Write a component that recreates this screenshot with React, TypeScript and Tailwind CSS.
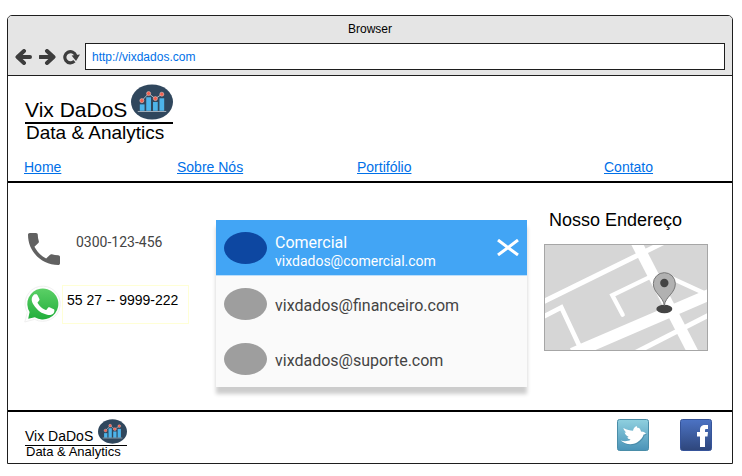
const sans = "font-['Liberation_Sans',Arial,sans-serif]";
const roboto = "font-[Roboto,sans-serif]";
const linkColor = 'text-[#0070e8]';

function ArrowIcon({ flip = false }: { flip?: boolean }) {
  return (
    <svg viewBox="0 0 17 16" className="h-4 w-[17px]" fill="none" stroke="#3d3d3d" strokeWidth="4" aria-hidden="true">
      {flip ? <path d="M1 8H14M8 2l6.500 6L8 14" strokeLinejoin="round" strokeLinecap="round" /> : <path d="M15 8H3M9 2L2.500 8 9 14" strokeLinejoin="round" strokeLinecap="round" />}
    </svg>
  );
}

function ReloadIcon() {
  return (
    <svg viewBox="0 0 17 16" className="h-4 w-[17px]" aria-hidden="true">
      <path d="M11.400 12.200A5.600 5.600 0 1 1 12.800 6.600" fill="none" stroke="#3d3d3d" strokeWidth="3.200" />
      <path d="M8.600 6.600L17 5.600 13 12z" fill="#3d3d3d" />
    </svg>
  );
}

function ChartBadge({ className }: { className: string }) {
  return (
    <svg viewBox="0 0 124 106" className={className} aria-hidden="true">
      <ellipse cx="62" cy="53" rx="62" ry="52" fill="#30475d" />
      <g fill="#4db4ea">
        <rect x="26" y="60" width="14" height="19" />
        <rect x="45" y="39" width="14" height="40" />
        <rect x="65" y="53" width="14" height="26" />
        <rect x="84" y="42" width="14" height="37" />
      </g>
      <path d="M20 81H104" stroke="#dfe6ea" strokeWidth="2" />
      <path d="M32 49L52 28 72 43 91 30" fill="none" stroke="#e8ecef" strokeWidth="2" />
      <g fill="#f0604f" stroke="#f6d3ce" strokeWidth="1.500">
        <circle cx="32" cy="49" r="6" />
        <circle cx="52" cy="28" r="6" />
        <circle cx="72" cy="43" r="6" />
        <circle cx="91" cy="30" r="6" />
      </g>
    </svg>
  );
}

const handset =
  'M6.62 10.79c1.44 2.83 3.76 5.14 6.59 6.59l2.2-2.2c.27-.27.67-.36 1.02-.24 1.12.37 2.33.57 3.57.57.55 0 1 .45 1 1V20c0 .55-.45 1-1 1-9.39 0-17-7.61-17-17 0-.55.45-1 1-1h3.5c.55 0 1 .45 1 1 0 1.25.2 2.45.57 3.57.11.35.03.74-.25 1.02l-2.2 2.2z';

function WhatsAppIcon() {
  return (
    <svg viewBox="0 0 38 38" className="h-[38px] w-[38px] shrink-0" aria-hidden="true">
      <defs>
        <linearGradient id="wa" x1="0" y1="0" x2="0" y2="1">
          <stop offset="0" stopColor="#5bd066" />
          <stop offset="1" stopColor="#22ae3c" />
        </linearGradient>
      </defs>
      <path d="M.8 37L3.300 27.400A17.600 17.600 0 1 1 10.600 34.400z" fill="#fdfdfd" stroke="#ececec" strokeWidth=".8" />
      <path d="M4.200 33.700L5.600 27A15.500 15.500 0 1 1 10.800 32.200z" fill="url(#wa)" />
      <path
        d="M13.400 10.100c-.4-.9-.8-.9-1.200-.9h-1c-.4 0-1 .1-1.500.7-.5.6-2 1.900-2 4.600s2 5.400 2.300 5.700c.3.4 3.900 6.200 9.600 8.400 4.700 1.900 5.700 1.500 6.700 1.400 1-.1 3.300-1.300 3.700-2.600.5-1.300.5-2.400.3-2.600-.1-.3-.5-.4-1.100-.7l-3.700-1.800c-.5-.2-.9-.3-1.300.3l-1.700 2.100c-.3.4-.7.4-1.200.1-.6-.3-2.400-.9-4.500-2.800-1.700-1.500-2.800-3.300-3.100-3.900-.3-.6 0-.9.2-1.100l.9-1c.3-.3.4-.6.6-.9.2-.4.1-.7 0-1z"
        fill="#fff"
      />
    </svg>
  );
}

function StreetMap() {
  return (
    <svg viewBox="0 0 492 321" className="block w-full" role="img" aria-label="Mapa">
      <rect width="492" height="321" fill="#d6d6d6" />
      <g fill="none" stroke="#fff">
        <path d="M-8 176L360 -5" strokeWidth="15" />
        <path d="M272 -14L452 335" strokeWidth="33" />
        <path d="M85 329L510 146" strokeWidth="35" />
        <path d="M-8 221L52 190 108 310" strokeWidth="14" />
        <path d="M320 98L205 154 236 212" strokeWidth="13" strokeLinecap="round" />
        <path d="M380 101L480 147" strokeWidth="13" />
        <path d="M270 328L505 208" strokeWidth="15" />
      </g>
      <ellipse cx="361" cy="195" rx="24" ry="12.500" fill="#444" />
      <path d="M361 184C358 158 328 148 328 119A33 33 0 0 1 394 119C394 148 364 158 361 184z" fill="#b1b1b1" stroke="#777" strokeWidth="3" />
      <circle cx="361" cy="117" r="12.500" fill="#444" />
      <rect x="1.500" y="1.500" width="489" height="318" fill="none" stroke="#a6a6a6" strokeWidth="3" />
    </svg>
  );
}

const bird =
  'M29 14.500C27.500 13 26 12.300 24 12.500 24 10.500 22.500 8.500 20.500 8.700L19.500 7C17.800 7.800 16.500 9.300 16 11.800 13 11.800 10 10.800 6.300 9 7 11 8 12.500 9.300 13.500L7.600 13.500C8.200 15.500 9.800 17.200 11.800 17.900L10.200 18.500C11 19.700 12 20.300 13.500 20.700 11 22.300 7.500 22.600 3.700 21.500 8 25.500 15 26.300 20 23.500 24 21.200 26 18 26.600 15.600 27.600 15.600 28.400 15.200 29 14.500z';

function TwitterIcon() {
  return (
    <svg viewBox="0 0 32 32" className="h-8 w-8" aria-hidden="true">
      <defs>
        <linearGradient id="tw" x1="0" y1="0" x2="0" y2="1">
          <stop offset="0" stopColor="#8fd0df" />
          <stop offset="1" stopColor="#4a93b8" />
        </linearGradient>
      </defs>
      <rect x=".5" y=".5" width="31" height="31" rx="2" fill="url(#tw)" stroke="#4a8da8" />
      <path d={bird} transform="translate(.8 1)" fill="#3d7f9d" opacity=".6" />
      <path d={bird} fill="#fff" />
    </svg>
  );
}

function FacebookIcon() {
  return (
    <svg viewBox="0 0 32 32" className="h-8 w-8" aria-hidden="true">
      <defs>
        <linearGradient id="fb" x1="0" y1="0" x2="0" y2="1">
          <stop offset="0" stopColor="#4c73c4" />
          <stop offset="1" stopColor="#2e467b" />
        </linearGradient>
      </defs>
      <rect x=".5" y=".5" width="31" height="31" rx="2" fill="url(#fb)" stroke="#36549a" />
      <path d="M20 28V17.500H17V13H20V11C20 7.500 21.800 6 25 6H28V10H26.200C25.200 10 25 10.500 25 11.500V13H28L27.500 17.500H25V28z" fill="#fff" />
    </svg>
  );
}

const navItems = ['Home', 'Sobre Nós', 'Portifólio', 'Contato'];
const contacts = ['vixdados@financeiro.com', 'vixdados@suporte.com'];

export default function App() {
  return (
    <div className={`${sans} bg-white pt-[15px] pr-[9px] pb-3 pl-[7px] text-black`}>
      <div className="overflow-hidden rounded-t-[5px] border border-[#1e1e1e]">
        <div className="border-b border-[#1e1e1e] bg-[#e5e5e5] px-[7px] pb-[5px]">
          <div className="pt-px pb-[2px] text-center text-xs leading-6">Browser</div>
          <div className="flex items-center">
            <div className="flex gap-[7px] pr-[5px]">
              <button type="button" aria-label="Voltar"><ArrowIcon /></button>
              <button type="button" aria-label="Avançar"><ArrowIcon flip /></button>
              <button type="button" aria-label="Recarregar"><ReloadIcon /></button>
            </div>
            <input
              aria-label="Endereço"
              defaultValue="http://vixdados.com"
              className={`h-[27px] min-w-0 flex-1 border border-[#1e1e1e] bg-white px-[6px] text-xs outline-none ${linkColor}`}
            />
          </div>
        </div>

        <header className="border-b-2 border-black pt-2 pb-1 pl-4">
          <div className="ml-px w-[148px]">
            <div className="flex items-end justify-between border-b-2 border-black pb-[2px]">
              <span className="text-[21px] leading-5 whitespace-nowrap">Vix DaDoS</span>
              <ChartBadge className="h-9 w-[42px] shrink-0" />
            </div>
            <div className="pl-px text-[19px] leading-[18px] whitespace-nowrap">Data &amp; Analytics</div>
          </div>
          <nav className="mt-[15px] grid grid-cols-[153fr_180fr_247fr_128fr] text-sm leading-5">
            {navItems.map((item) => (
              <a key={item} href="#" className={`justify-self-start underline ${linkColor}`}>{item}</a>
            ))}
          </nav>
        </header>

        <main className="grid grid-cols-[175fr_311fr_164fr] items-start gap-[17px] pr-6 pb-[23px] pl-4">
          <section className="pt-[50px]">
            <div className="flex items-start gap-4 pl-1">
              <svg viewBox="3 3 18 18" preserveAspectRatio="none" className="h-8 w-8 shrink-0" aria-hidden="true">
                <path d={handset} fill="#616161" />
              </svg>
              <span className={`${roboto} text-sm leading-[18px] text-[#444]`}>0300-123-456</span>
            </div>
            <div className="mt-5 flex items-start">
              <WhatsAppIcon />
              <div className="h-[39px] w-[127px] border border-[#ffffd6] px-1 py-1 text-sm leading-5 whitespace-nowrap">55 27 -- 9999-222</div>
            </div>
          </section>

          <section className={`${roboto} mt-[37px] bg-[#fafafa] shadow-[0_7px_4px_rgba(0,0,0,0.2)]`}>
            <div className="flex h-14 items-center border-b border-[#bbdefb] bg-[#42a5f5] px-2 text-white">
              <span className="h-8 w-[43px] shrink-0 rounded-[50%] bg-[#0d47a1]" />
              <div className="ml-2 flex-1 pt-2">
                <div className="text-base leading-[18px]">Comercial</div>
                <div className="text-sm leading-[18px]">vixdados@comercial.com</div>
              </div>
              <button type="button" aria-label="Fechar">
                <svg viewBox="0 0 22 17" className="h-[17px] w-[22px]" fill="none" stroke="#fff" strokeWidth="3" aria-hidden="true">
                  <path d="M1 1L21 16M21 1L1 16" />
                </svg>
              </button>
            </div>
            <ul className="pb-px">
              {contacts.map((mail) => (
                <li key={mail} className="flex h-[55px] items-center px-2">
                  <span className="h-8 w-[43px] shrink-0 rounded-[50%] bg-[#9e9e9e]" />
                  <span className="ml-2 pt-1 text-base leading-5 text-[#444]">{mail}</span>
                </li>
              ))}
            </ul>
          </section>

          <section className="pt-[25px]">
            <h2 className="mb-3 pl-[5px] text-lg leading-6 whitespace-nowrap">Nosso Endereço</h2>
            <StreetMap />
          </section>
        </main>

        <footer className="flex items-start justify-between border-t-2 border-black pt-[7px] pr-5 pb-[5px] pl-4">
          <div className="ml-px w-[102px]">
            <div className="flex items-end justify-between border-b border-black pb-px">
              <span className="text-sm leading-4 whitespace-nowrap">Vix DaDoS</span>
              <ChartBadge className="h-[25px] w-[29px] shrink-0" />
            </div>
            <div className="pl-px text-[13px] leading-3 whitespace-nowrap">Data &amp; Analytics</div>
          </div>
          <div className="flex gap-[31px]">
            <a href="#" aria-label="Twitter"><TwitterIcon /></a>
            <a href="#" aria-label="Facebook"><FacebookIcon /></a>
          </div>
        </footer>
      </div>
    </div>
  );
}
